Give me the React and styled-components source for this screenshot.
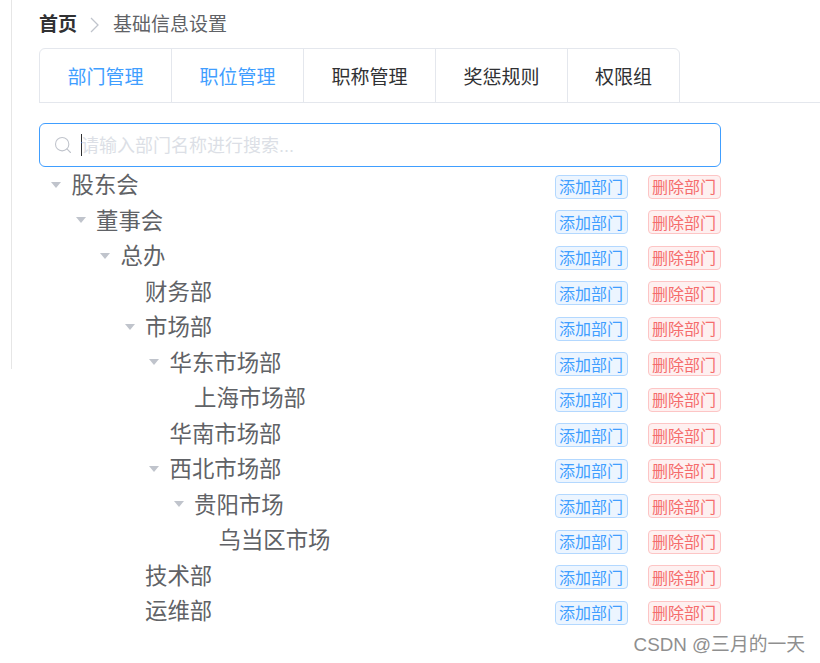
import React from "react";
import styled, { createGlobalStyle } from "styled-components";
import { Search } from "lucide-react";

const departments = [
  { name: "股东会", level: 0, open: true },
  { name: "董事会", level: 1, open: true },
  { name: "总办", level: 2, open: true },
  { name: "财务部", level: 3 },
  { name: "市场部", level: 3, open: true },
  { name: "华东市场部", level: 4, open: true },
  { name: "上海市场部", level: 5 },
  { name: "华南市场部", level: 4 },
  { name: "西北市场部", level: 4, open: true },
  { name: "贵阳市场", level: 5, open: true },
  { name: "乌当区市场", level: 6 },
  { name: "技术部", level: 3 },
  { name: "运维部", level: 3 },
];

const tabs = [
  { label: "部门管理", active: true },
  { label: "职位管理", active: true },
  { label: "职称管理" },
  { label: "奖惩规则" },
  { label: "权限组", short: true },
];

export default function App() {
  return (
    <>
      <GlobalStyle />
      <Page>
        <SideLine />
        <Breadcrumb>
          <Crumb $strong>首页</Crumb>
          <CrumbArrow viewBox="0 0 12 18">
            <path d="M2 2l7 7-7 7" fill="none" stroke="#c0c4cc" strokeWidth="1.3" />
          </CrumbArrow>
          <Crumb>基础信息设置</Crumb>
        </Breadcrumb>

        <TabBar>
          <TabGroup>
            {tabs.map((tab) => (
              <Tab key={tab.label} $active={tab.active} $short={tab.short}>
                {tab.label}
              </Tab>
            ))}
          </TabGroup>
        </TabBar>

        <Content>
          <SearchBox>
            <Search size={20} strokeWidth={1.3} color="#c0c4cc" />
            <Caret />
            <Placeholder>请输入部门名称进行搜索...</Placeholder>
          </SearchBox>

          <Tree>
            {departments.map((dept) => (
              <Row key={dept.name}>
                <Node $level={dept.level}>
                  <Arrow $visible={dept.open} />
                  <NodeName>{dept.name}</NodeName>
                </Node>
                <Actions>
                  <Tag>添加部门</Tag>
                  <Tag $danger>删除部门</Tag>
                </Actions>
              </Row>
            ))}
          </Tree>
        </Content>

        <Watermark>CSDN @三月的一天</Watermark>
      </Page>
    </>
  );
}

const GlobalStyle = createGlobalStyle`
  html, body {
    margin: 0;
    background: #fff;
    font-family: "Liberation Sans", "Noto Sans CJK SC", sans-serif;
  }
`;

const Page = styled.div`
  position: relative;
  width: 820px;
  height: 663px;
  overflow: hidden;
  padding-top: 14px;
  box-sizing: border-box;
`;

const SideLine = styled.div`
  position: absolute;
  left: 11px;
  top: 0;
  width: 1px;
  height: 369px;
  background: #e6e6e6;
`;

const Breadcrumb = styled.div`
  display: flex;
  align-items: center;
  height: 22px;
  padding-left: 39px;
`;

const CrumbArrow = styled.svg`
  width: 12px;
  height: 18px;
  margin: 0 12px 0 12px;
`;

const Crumb = styled.span`
  font-size: 19px;
  line-height: 22px;
  font-weight: ${(props) => (props.$strong ? 700 : 400)};
  color: ${(props) => (props.$strong ? "#303133" : "#606266")};
`;

const TabBar = styled.div`
  margin: 12px 0 0 39px;
  border-bottom: 1px solid #e4e7ed;
  height: 54px;
`;

const TabGroup = styled.div`
  display: inline-flex;
  height: 55px;
  box-sizing: border-box;
  border: 1px solid #e4e7ed;
  border-radius: 6px 6px 0 0;
`;

const Tab = styled.div`
  box-sizing: border-box;
  width: ${(props) => (props.$short ? "112px" : "132px")};
  display: flex;
  align-items: center;
  justify-content: center;
  font-size: 19px;
  color: ${(props) => (props.$active ? "#409eff" : "#303133")};
  border-left: 1px solid #e4e7ed;

  &:first-child {
    width: 131px;
    border-left: none;
  }
`;

const Content = styled.div`
  width: 682px;
  margin: 20px 0 0 39px;
`;

const SearchBox = styled.div`
  box-sizing: border-box;
  height: 44px;
  display: flex;
  align-items: center;
  padding-left: 13px;
  border: 1px solid #409eff;
  border-radius: 6px;
`;

const Caret = styled.span`
  width: 1px;
  height: 22px;
  margin-left: 8px;
  background: #303133;
`;

const Placeholder = styled.span`
  font-size: 18px;
  color: #dcdfe6;
  white-space: nowrap;
  margin: 0 0 2px -1px;
`;

const Tree = styled.div`
  margin-top: 2px;
`;

const Row = styled.div`
  height: 35.5px;
  display: flex;
  align-items: center;
  justify-content: space-between;
`;

const Node = styled.div`
  display: flex;
  align-items: center;
  padding-left: ${(props) => 12 + props.$level * 24.5}px;
`;

const Arrow = styled.span`
  width: 0;
  height: 0;
  margin: 0 10.5px 4px 0;
  border-left: 5.5px solid transparent;
  border-right: 5.5px solid transparent;
  border-top: 6px solid ${(props) => (props.$visible ? "#c0c4cc" : "transparent")};
`;

const NodeName = styled.span`
  font-size: 22.4px;
  line-height: 28px;
  padding-bottom: 1px;
  color: #606266;
  white-space: nowrap;
`;

const Actions = styled.div`
  display: flex;
  gap: 20px;
`;

const Tag = styled.span`
  box-sizing: border-box;
  width: 73px;
  height: 24px;
  padding: 0 1px 1px 0;
  display: flex;
  align-items: center;
  justify-content: center;
  font-size: 16px;
  white-space: nowrap;
  border-radius: 4px;
  border: 1px solid ${(props) => (props.$danger ? "#fdc5c5" : "#b3d8ff")};
  background: ${(props) => (props.$danger ? "#fef0f0" : "#ecf5ff")};
  color: ${(props) => (props.$danger ? "#f56c6c" : "#409eff")};
`;

const Watermark = styled.div`
  position: absolute;
  right: 15px;
  bottom: 6px;
  font-size: 18.8px;
  line-height: 24px;
  color: #8f8f8f;
  white-space: nowrap;
`;
